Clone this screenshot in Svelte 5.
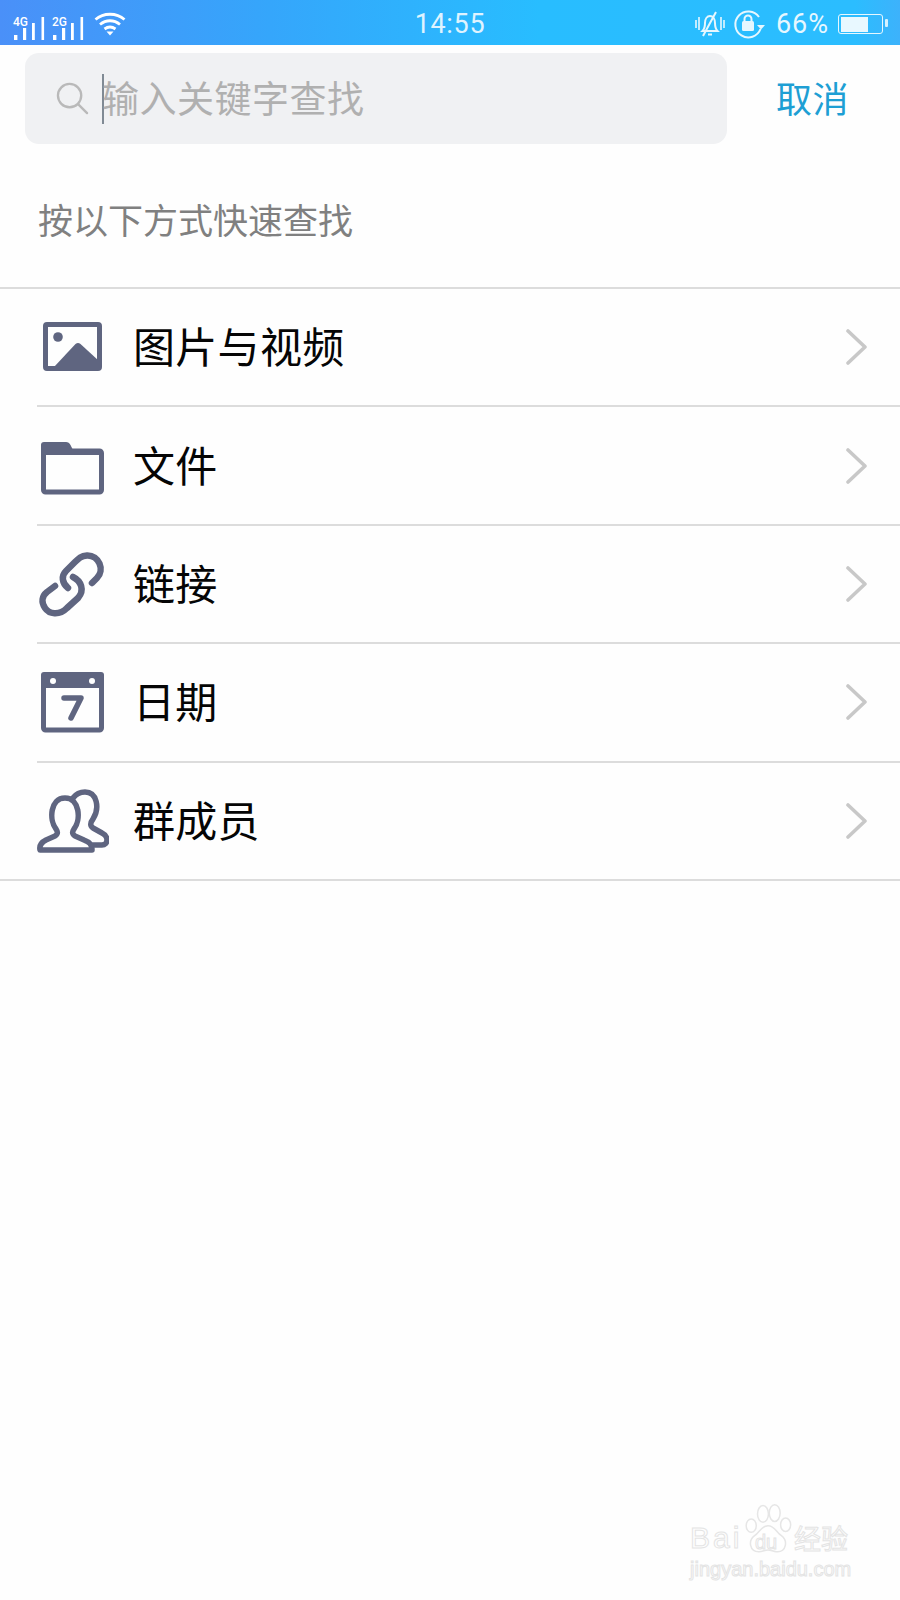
<script>
  const rows = [
    { id: 'image', label: '图片与视频' },
    { id: 'folder', label: '文件' },
    { id: 'link', label: '链接' },
    { id: 'calendar', label: '日期', shift: true },
    { id: 'people', label: '群成员' }
  ];
  const sims = [
    { net: '4G', cls: 'a' },
    { net: '2G', cls: 'b' }
  ];
</script>

<div class="page">
  <header class="status">
    <div class="left">
      {#each sims as sim}
        <div class="signal {sim.cls}">
          <span class="net">{sim.net}</span>
          <svg width="32" height="24" viewBox="0 0 32 24"><g fill="#fff"><rect x="1" y="18" width="3.400" height="5"/><rect x="10" y="11" width="3.200" height="12"/><rect x="19" y="6" width="2.800" height="17"/><rect x="28.500" y="0" width="2.600" height="23"/></g></svg>
        </div>
      {/each}
      <svg class="wifi" width="32" height="24" viewBox="0 0 32 24" fill="none" stroke="#fff" stroke-width="2.800"><path d="M1.500 7.500C9.500 0.500 22.500 0.500 30.500 7.500"/><path d="M6 12.500C12 7.500 20 7.500 26 12.500"/><path d="M10.500 17C14 14.500 18 14.500 21.500 17"/><path d="M12.500 19.500h7L16 23.500z" fill="#fff" stroke="none"/></svg>
    </div>
    <div class="time">14:55</div>
    <div class="right">
      <svg width="30" height="26" viewBox="0 0 30 26" fill="none" stroke="#e6f7ff" stroke-width="2"><path d="M1 9v8M4 6v13M26 6v13M29 9v8" stroke-width="1.600"/><path d="M7.500 20c2-2 2.500-4 2.500-8 0-4 2-7 5-7s5 3 5 7c0 4 .5 6 2.500 8z"/><path d="M13 23.500h4M21 1L8 25"/></svg>
      <svg class="lock" width="32" height="32" viewBox="0 0 32 32" fill="none"><path d="M26 9A13 13 0 1 0 27.500 21" stroke="#e6f7ff" stroke-width="2"/><path d="M24 17h8l-4 4.500z" fill="#e6f7ff"/><rect x="9" y="13" width="12" height="10" rx="1.500" fill="#e6f7ff"/><path d="M11.500 13V11a3.500 3.500 0 0 1 7 0v2" stroke="#e6f7ff" stroke-width="2"/></svg>
      <span class="pct">66%</span>
      <div class="battery"><div class="level"></div></div>
    </div>
  </header>

  <div class="searchbar">
    <div class="search">
      <svg class="glass" width="33" height="33" viewBox="0 0 34 34" fill="none" stroke="#b9b9b9" stroke-width="2.400"><circle cx="14" cy="14" r="12"/><path d="M23 23l9 9" stroke-linecap="round"/></svg>
      <span class="caret"></span>
      <span class="placeholder">输入关键字查找</span>
    </div>
    <span class="cancel">取消</span>
  </div>

  <p class="hint">按以下方式快速查找</p>

  <ul class="list">
    {#each rows as row}
      <li class="row">
        <div class="inner">
          <svg class="icon" width="72" height="72" viewBox="0 0 72 72">
            {#if row.id === 'image'}
              <rect x="8.500" y="13.500" width="54" height="44" rx="1.500" fill="none" stroke="#5f6580" stroke-width="5"/>
              <path d="M17 56L38.500 33q2.500-2 5 0L62 50v8H17z" fill="#5f6580"/>
              <circle cx="21" cy="26" r="4.800" fill="#5f6580"/>
            {:else if row.id === 'folder'}
              <rect x="6.500" y="21" width="58" height="41" rx="2" fill="none" stroke="#5f6580" stroke-width="5"/>
              <path d="M4 24V15q0-3 3-3h22q3 0 4.500 3l3 6 29 .5V25H4z" fill="#5f6580"/>
            {:else if row.id === 'link'}
              <g fill="none" stroke="#5f6580" stroke-width="6.500" stroke-linecap="round" stroke-linejoin="round">
                <path d="M55 35L60 30C68 22 62 7 50 7.500C44 8 42 10 38 14L29 23C24 28 25 35 31 40"/>
                <path d="M36 29C44 33 48 42 41 50L30 60C22 68 12 66 8 60C4 54 5 48 10 44L18 38"/>
              </g>
            {:else if row.id === 'calendar'}
              <rect x="6.500" y="9" width="58" height="55" rx="2" fill="none" stroke="#5f6580" stroke-width="5"/>
              <path d="M4 9q0-3 3-3h57q3 0 3 3v13H4z" fill="#5f6580"/>
              <circle cx="16" cy="15" r="3" fill="#fff"/>
              <circle cx="55" cy="15" r="3" fill="#fff"/>
              <path d="M27 32h17L34 52" fill="none" stroke="#5f6580" stroke-width="5.500" stroke-linecap="round" stroke-linejoin="round"/>
            {:else}
              <g fill="none" stroke="#5f6580" stroke-width="5.500" stroke-linejoin="round" stroke-linecap="round">
                <path d="M3 65c-1-5 2-8 6-10l9-4c3-2 3-4 1-7-7-9-6-31 9-31s16 22 9 31c-2 3-2 5 1 7l9 4c5 2 8 4 8 10z"/>
                <path d="M36 13c3-4 8-6 12-6 12 0 15 16 8 27-3 4-3 7 0 9l9 5c4 2 5 5 5 7 0 3-2 5-5 5h-9"/>
              </g>
            {/if}
          </svg>
          <span class="label" class:shift={row.shift}>{row.label}</span>
          <svg class="chevron" width="22" height="36" viewBox="0 0 22 36" fill="none" stroke="#c8c8c8" stroke-width="3.600" stroke-linecap="round" stroke-linejoin="round"><path d="M2 2l17 16L2 34"/></svg>
        </div>
      </li>
    {/each}
  </ul>

  <div class="mark">
    <div class="brand">
      <span class="bai">Bai</span>
      <span class="paw">
        <svg width="52" height="52" viewBox="0 2 62 60" fill="#fff" stroke="#e6e6e6" stroke-width="1.800"><ellipse cx="11" cy="28" rx="6" ry="8"/><ellipse cx="25" cy="14" rx="6.500" ry="10"/><ellipse cx="39" cy="13" rx="6.500" ry="10"/><ellipse cx="52" cy="27" rx="6" ry="8"/><path d="M31 28c8 0 10 8 16 12 8 6 6 20-6 19-4 0-6-2-10-2s-6 2-11 2c-11 0-13-13-5-19 6-4 8-12 16-12z"/></svg>
        <span class="du">du</span>
      </span>
      <span class="cn">经验</span>
    </div>
    <div class="url">jingyan.baidu.com</div>
  </div>
</div>

<style>
  :global(body) {
    margin: 0;
    background: #fff;
  }
  .page {
    position: relative;
    width: 900px;
    height: 1600px;
    overflow: hidden;
    background: #fefefe;
    font-family: "Noto Sans CJK SC", "Noto Sans", sans-serif;
  }
  .status {
    height: 45px;
    display: grid;
    grid-template-columns: 1fr auto 1fr;
    align-items: center;
    padding: 0 13px;
    box-sizing: border-box;
    background: linear-gradient(90deg, #4a90f8 0%, #35a6fb 30%, #28bdff 60%, #2bbdff 95%, #3db2fb 100%);
    color: #e6f7ff;
  }
  .left {
    display: flex;
    align-items: center;
    gap: 7px;
  }
  .signal {
    position: relative;
    width: 32px;
    height: 24px;
    margin-top: 10px;
  }
  .signal svg {
    display: block;
  }
  .net {
    position: absolute;
    left: 0;
    top: -1px;
    font-family: Roboto, sans-serif;
    font-size: 12px;
    line-height: 12px;
    font-weight: 500;
    color: #fff;
  }
  .wifi {
    margin-left: 3px;
    margin-top: -1px;
  }
  .time {
    font-family: Roboto, sans-serif;
    font-size: 27px;
    letter-spacing: 0.700px;
    line-height: 48px;
    color: #dff3ff;
  }
  .right {
    display: flex;
    align-items: center;
    justify-content: flex-end;
    gap: 8px;
    margin-right: -3px;
  }
  .lock {
    margin-right: 3px;
  }
  .pct {
    font-family: Roboto, sans-serif;
    font-size: 27px;
    letter-spacing: 1px;
    line-height: 47px;
  }
  .battery {
    position: relative;
    width: 40px;
    height: 15px;
    border: 1.500px solid #e6f7ff;
    border-radius: 3px;
    padding: 1.500px;
    margin-left: 1px;
    margin-right: 7px;
    box-sizing: content-box;
  }
  .battery::after {
    content: "";
    position: absolute;
    right: -6px;
    top: 4px;
    width: 3px;
    height: 8px;
    background: #d5f1ff;
    border-radius: 1px;
  }
  .level {
    width: 27px;
    height: 100%;
    background: #e8f8ff;
  }
  .searchbar {
    display: flex;
    align-items: center;
    padding: 8px 0 0 25px;
  }
  .search {
    width: 702px;
    height: 91px;
    border-radius: 14px;
    background: #f0f1f3;
    display: flex;
    align-items: center;
    padding-left: 31px;
    box-sizing: border-box;
  }
  .glass {
    flex: none;
  }
  .caret {
    width: 2px;
    height: 50px;
    background: #808a94;
    margin-left: 13px;
    flex: none;
  }
  .placeholder {
    font-size: 37px;
    letter-spacing: 0.500px;
    color: #b0b0b0;
    line-height: 50px;
    margin-left: -2px;
    margin-top: -3px;
  }
  .cancel {
    font-size: 36px;
    letter-spacing: 0.500px;
    color: #1e9fd4;
    margin-left: 49px;
    line-height: 50px;
    margin-top: -4px;
  }
  .hint {
    margin: 0;
    padding: 50px 0 0 38px;
    height: 143px;
    box-sizing: border-box;
    font-size: 35px;
    line-height: 50px;
    color: #808080;
    white-space: nowrap;
  }
  .list {
    list-style: none;
    margin: 0;
    padding: 0;
    border-top: 2px solid #dcdcdc;
    border-bottom: 2px solid #dcdcdc;
  }
  .row {
    height: 118.400px;
    padding-left: 37px;
    box-sizing: border-box;
  }
  .row:last-child {
    height: 116.400px;
  }
  .inner {
    height: 100%;
    display: flex;
    align-items: center;
    box-sizing: border-box;
    border-bottom: 2px solid #dcdcdc;
  }
  .row:last-child .inner {
    border-bottom: 0;
  }
  .icon {
    flex: none;
  }
  .label {
    margin-left: 24px;
    margin-top: -4px;
    font-size: 42px;
    letter-spacing: 0.300px;
    line-height: 60px;
    color: #050505;
    white-space: nowrap;
  }
  .chevron {
    margin-left: auto;
    margin-right: 32px;
    flex: none;
  }
  .mark {
    position: absolute;
    left: 690px;
    top: 1503px;
    width: 170px;
    color: transparent;
    -webkit-text-stroke: 1px #e4e4e4;
  }
  .brand {
    display: flex;
    align-items: flex-end;
    height: 52px;
  }
  .bai {
    font-family: "Liberation Sans", sans-serif;
    font-size: 30px;
    letter-spacing: 3px;
    line-height: 34px;
    width: 52px;
  }
  .paw {
    position: relative;
    display: block;
    width: 52px;
    height: 52px;
  }
  .paw svg {
    display: block;
  }
  .du {
    position: absolute;
    left: 13px;
    top: 27px;
    font-family: "Liberation Sans", sans-serif;
    font-size: 20px;
    line-height: 24px;
  }
  .cn {
    font-size: 27px;
    line-height: 34px;
    white-space: nowrap;
  }
  .url {
    font-family: "Liberation Sans", sans-serif;
    font-size: 20px;
    line-height: 24px;
    margin-top: 2px;
    white-space: nowrap;
  }
</style>
